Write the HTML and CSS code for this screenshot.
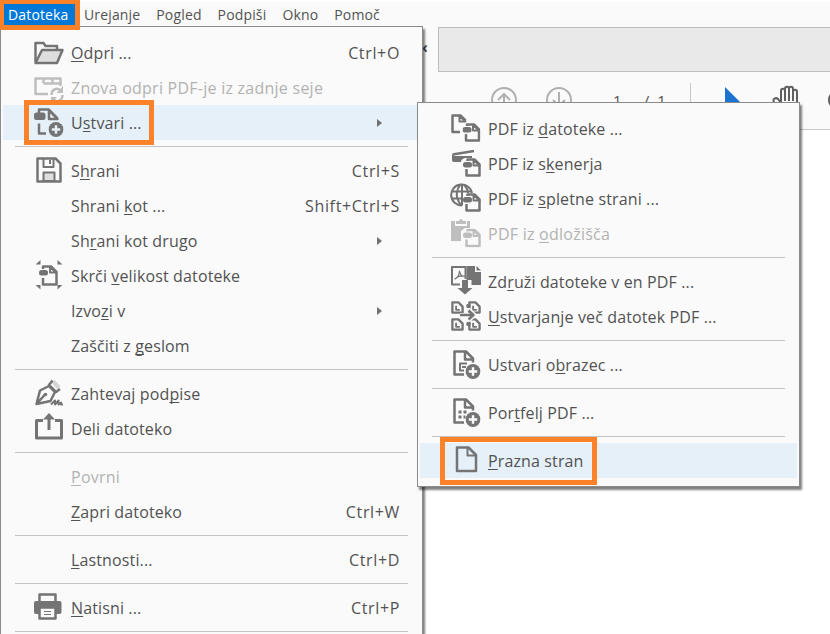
FILE: index.html
```
<!DOCTYPE html>
<html lang="sl">
<head>
    <title>Datoteka</title>
    <meta charset="utf-8">
    <link rel="stylesheet" href="styles.css">
</head>
<body>
    <svg class="defs">
        <symbol id="pdf-small" viewBox="0 0 18 19">
            <path d="M4.500 3V1.500h7l5 5v11H3.500V11" class="line"/>
            <path d="M10.500 2v5.500h6z" class="line thin"/>
            <rect x="0" y="4" width="9" height="5.500" rx="2.500" class="solid"/>
        </symbol>
        <symbol id="plus" viewBox="0 0 16 16">
            <circle cx="8" cy="8" r="8" class="solid"/>
            <path d="M8 3.500v9M3.500 8h9" class="knock"/>
        </symbol>
        <symbol id="page-tiny" viewBox="0 0 14 14">
            <path d="M1.500 1.500h6.500l4.500 4.500v6.500h-11z" class="line"/>
            <path d="M5.500 5v4.500h4" class="line thin"/>
        </symbol>
    </svg>

    <div class="menubar">
        <span class="active">Datoteka</span>
        <span>Urejanje</span>
        <span>Pogled</span>
        <span>Podpiši</span>
        <span>Okno</span>
        <span>Pomoč</span>
    </div>

    <div class="workspace">
        <div class="tabs"><span class="chevron">‹</span><div class="tab-area"></div></div>
        <div class="toolbar">
            <svg class="tool-icons" viewBox="0 0 406 57" width="406" height="57">
                <g class="nav">
                    <circle cx="80" cy="28" r="12"/><path d="M80 36V22M74 28l6-6 6 6"/>
                    <circle cx="135" cy="28" r="12"/><path d="M135 20v14M129 28l6 6 6-6"/>
                </g>
                <path d="M266.500 11v46" class="divider"/>
                <path d="M301 15l22 22h-13l-9 9z" class="pointer"/>
                <g class="hand">
                    <path d="M356 38l-6-8c-2-3 2-5 4-3l3 4V19c0-3 4-3 4 0v10V17c0-3 4-3 4 0v12V17c0-3 4-3 4 0v12V20c0-3 4-3 4 0v18"/>
                </g>
                <circle cx="414" cy="28" r="9" class="lens"/>
            </svg>
            <div class="pages"><span>1</span><span>/</span><span>1</span></div>
        </div>
    </div>

    <div class="menu file-menu">
        <div class="item">
            <svg class="icon" viewBox="0 0 32 35"><path d="M2.500 27V8h8l2 3h11.500v4" class="line"/><path d="M2.500 28l6.500-13h20.500l-5.500 13z" class="line pale"/></svg>
            <span><u>O</u>dpri ...</span><kbd>Ctrl+O</kbd>
        </div>
        <div class="item disabled">
            <svg class="icon" viewBox="0 0 32 35"><path d="M15 24H2.500V8.500h25v7.500M10.500 13.500h17M10.500 8v5M19.500 8v5" class="line"/><path d="M18.500 25c0-6 6-8 9.500-4M29.500 25c0 6-6 8-9.500 4" class="line"/><path d="M30 16v7h-6.500zM18 33.500v-6.500h6z" class="solid"/></svg>
            <span>Znova odpri PDF-je iz zadnje seje</span>
        </div>
        <div class="item selected">
            <svg class="icon" viewBox="0 0 32 35"><path d="M6 8V4.500h9.500l9 9M6 18.500V28.500h7" class="line"/><path d="M16 5v9h8.500z" class="line"/><rect x="1" y="7.500" width="11.500" height="7.500" rx="2.500" class="solid"/><use href="#plus" x="15.500" y="17" width="15" height="15"/></svg>
            <span>U<u>s</u>tvari ...</span><i class="arrow"></i>
        </div>
        <hr>
        <div class="item">
            <svg class="icon" viewBox="0 0 32 35"><path d="M4.500 5.500h18l5 5v18h-23z" class="line"/><path d="M10.500 6v8h10V6" class="line thin"/><path d="M10.500 28v-8.500h11V28z" class="line thin pale"/><path d="M17 7v4" class="line thin"/></svg>
            <span>S<u>h</u>rani</span><kbd>Ctrl+S</kbd>
        </div>
        <div class="item"><i class="icon"></i><span>Shrani <u>k</u>ot ...</span><kbd>Shift+Ctrl+S</kbd></div>
        <div class="item"><i class="icon"></i><span>Sh<u>r</u>ani kot drugo</span><i class="arrow"></i></div>
        <div class="item">
            <svg class="icon" viewBox="0 0 32 35"><path d="M10 11V8.500h8l5.500 5.500v12.500H10V20" class="line"/><path d="M17 9v5.500h6z" class="line thin"/><rect x="6" y="12" width="9" height="5.500" rx="2.500" class="solid"/><path d="M2.500 6.500h5V2zM29.500 6.500h-5V2zM2.500 27h5v4.500zM29.500 27h-5v4.500z" class="solid"/></svg>
            <span>Skrči <u>v</u>elikost datoteke</span>
        </div>
        <div class="item"><i class="icon"></i><span>Izvo<u>z</u>i v</span><i class="arrow"></i></div>
        <div class="item"><i class="icon"></i><span>Zaščiti z <u>g</u>eslom</span></div>
        <hr>
        <div class="item">
            <svg class="icon" viewBox="0 0 32 35"><path d="M18.500 6.500l3-2.500 6 6-3 3.500z" class="faded"/><path d="M3.500 28l3.500-13.500 9-4.500 6 6-4.500 9zM3.500 28l8.500-9.500" class="line"/><path d="M15.500 9.500l4-5M16 9l7 7 4-3" class="line"/><circle cx="12.500" cy="18.500" r="1.800" class="solid"/><path d="M18 28.500l4-4v4l3.500-4v4l2.500-2v2h2" class="line thin"/></svg>
            <span>Zahtevaj pod<u>p</u>ise</span>
        </div>
        <div class="item">
            <svg class="icon" viewBox="0 0 32 35"><path d="M10 9.500H3.500v17.500h25V9.500H22" class="line heavy"/><path d="M16 19V6" class="line heavy"/><path d="M10 8.500l6-6.500 6 6.500z" class="solid"/></svg>
            <span>Deli datoteko</span>
        </div>
        <hr>
        <div class="item disabled"><i class="icon"></i><span><u>P</u>ovrni</span></div>
        <div class="item"><i class="icon"></i><span><u>Z</u>apri datoteko</span><kbd>Ctrl+W</kbd></div>
        <hr>
        <div class="item"><i class="icon"></i><span><u>L</u>astnosti...</span><kbd>Ctrl+D</kbd></div>
        <hr>
        <div class="item">
            <svg class="icon" viewBox="0 0 32 35"><path d="M6.500 12V4.500h16V12" class="line"/><rect x="1" y="11" width="27.500" height="13" rx="2" class="solid"/><path d="M6.500 17.500h16v11h-16z" class="line blank"/><path d="M11 21.500h7M11 24.500h7" class="line hair"/></svg>
            <span><u>N</u>atisni ...</span><kbd>Ctrl+P</kbd>
        </div>
        <hr>
    </div>

    <div class="menu submenu">
        <div class="item">
            <svg class="icon" viewBox="0 0 32 35"><path d="M10 21H2.500V4.500h8l5 5" class="line"/><path d="M9.500 5v5.500h6z" class="line thin"/><use href="#pdf-small" x="12.500" y="12" width="18" height="19"/></svg>
            <span>PDF iz <u>d</u>atoteke ...</span>
        </div>
        <div class="item">
            <svg class="icon" viewBox="0 0 32 35"><path d="M2.500 8.500L24 5" class="line"/><path d="M2 8.500l3 1.500h17v2h-7q-4 1-4 4H4q-2 0-2-2z" class="solid"/><use href="#pdf-small" x="13" y="12" width="18" height="19"/></svg>
            <span>PDF iz s<u>k</u>enerja</span>
        </div>
        <div class="item">
            <svg class="icon" viewBox="0 0 32 35"><path d="M12 24.500A10.500 10.500 0 1 1 22 12M12 3.500v21M2 10.500h19M2 17.500h10M10 4q-7 10 1 20M14 4q4 4 4 8" class="line thin"/><use href="#pdf-small" x="13" y="12" width="18" height="19"/></svg>
            <span>PDF iz <u>s</u>pletne strani ...</span>
        </div>
        <div class="item disabled">
            <svg class="icon" viewBox="0 0 32 35"><path d="M1 5h4v5h12V5h3v7h-5l-4 3v10H1z" class="solid"/><path d="M6 8V5h3q2-4 4 0h3v3z" class="solid"/><use href="#pdf-small" x="13" y="12.500" width="18" height="19"/></svg>
            <span>PDF iz <u>o</u>dložišča</span>
        </div>
        <hr>
        <div class="item">
            <svg class="icon" viewBox="0 0 32 35"><path d="M10 20.500H2V3h13.500v12" class="line thin"/><path d="M5 15q4-2 4.500-8 1 6 5 5-6-1-9.500 3z" class="line hair"/><path d="M16.500 2H25v6h6v13h-9.500v-5h-5z" class="solid"/><path d="M26.500 2l4.500 4.500h-4.500z" class="solid"/><path d="M12 16h6v8h4.500L15 30.500 7.500 24H12z" class="solid"/></svg>
            <span>Zd<u>r</u>uži datoteke v en PDF ...</span>
        </div>
        <div class="item">
            <svg class="icon" viewBox="0 0 32 35"><use href="#page-tiny" x="1" y="2" width="13" height="13"/><use href="#page-tiny" x="1" y="19" width="13" height="13"/><use href="#page-tiny" x="18" y="2" width="13" height="13"/><use href="#page-tiny" x="18" y="19" width="13" height="13"/><path d="M10 16h15M17.500 9.500l7 6.500-7 6.500" class="halo-line"/><path d="M10 16h13M18.500 11.500l5 4.500-5 4.500" class="line"/><circle cx="18.500" cy="7" r="2.300" class="solid"/><circle cx="18.500" cy="25" r="2.300" class="solid"/></svg>
            <span><u>U</u>stvarjanje več datotek PDF ...</span>
        </div>
        <hr>
        <div class="item">
            <svg class="icon" viewBox="0 0 32 35"><path d="M14 27.500H4.500V4.500h11.500l7 7v4" class="line"/><path d="M15 5v7.500h8" class="line"/><path d="M17 16.500h-7v7h4M12 20h4" class="line thin"/><use href="#plus" x="15.500" y="17" width="15" height="15"/></svg>
            <span>Ustvari o<u>b</u>razec ...</span>
        </div>
        <hr>
        <div class="item">
            <svg class="icon" viewBox="0 0 32 35"><path d="M14 27.500H4.500V4.500h11.500l7 7v4" class="line"/><path d="M15 5v7.500h8" class="line"/><path d="M8.500 15.500h3v3h-3zM13.500 15.500h3v3h-3zM8.500 20.500h3v3h-3zM13.500 20.500h2v3h-2z" class="solid"/><use href="#plus" x="15.500" y="17" width="15" height="15"/></svg>
            <span>Por<u>t</u>felj PDF ...</span>
        </div>
        <hr>
        <div class="item selected">
            <svg class="icon" viewBox="0 0 32 35"><path d="M7 4.500h11.500l7.500 7.500v16H7z" class="line"/><path d="M17.500 5v7.500h8" class="line thin"/></svg>
            <span><u>P</u>razna stran</span>
        </div>
    </div>

    <div class="mark mark-file"></div>
    <div class="mark mark-create"></div>
    <div class="mark mark-blank"></div>
</body>
</html>
```

FILE: styles.css
```
body {
    font-family: "Open Sans", "Noto Sans", sans-serif;
    font-size: 16px;
    letter-spacing: 0.13px;
    color: #525252;
    background-color: white;
    margin: 0;
    position: relative;
    width: 830px;
    height: 634px;
    overflow: hidden;
}

.defs {
    position: absolute;
    width: 0;
    height: 0;
}

.menubar {
    display: flex;
    box-sizing: border-box;
    height: 27px;
    padding: 2px 0 2px 4px;
    background-color: #fafafa;
    border-top: 2px solid white;
    font-size: 14px;
    line-height: 21px;
    letter-spacing: 0.15px;
}

.menubar span {
    padding: 0 5px;
    margin-right: 6px;
}

.menubar .active {
    width: 63px;
    padding: 0 4px;
    margin-right: 4px;
    background-color: #0078d7;
    color: white;
}

.workspace {
    margin-left: 424px;
}

.tabs {
    display: flex;
    justify-content: space-between;
    height: 45px;
    background-color: #fafafa;
}

.tab-area {
    width: 392px;
    box-sizing: border-box;
    background-color: #e9e9e9;
    border: 1px solid #bdbdbd;
    border-right: 0;
}

.chevron {
    width: 4px;
    line-height: 40px;
    margin-left: -2px;
    font-weight: bold;
}

.toolbar {
    position: relative;
    height: 57px;
    background-color: #fafafa;
    border-bottom: 1px solid #c8c8c8;
}

.tool-icons {
    display: block;
}

.pages {
    position: absolute;
    left: 189px;
    top: 18px;
    display: flex;
    font-size: 15px;
    line-height: 20px;
}

.pages span:nth-child(2) {
    margin: 0 8px 0 22px;
}

.nav, .hand, .lens, .divider {
    fill: none;
    stroke: #b0b0b0;
    stroke-width: 2;
}

.divider {
    stroke: #c8c8c8;
    stroke-width: 1;
}

.hand, .lens {
    stroke: #606060;
}

.pointer {
    fill: #1a73d0;
}

.menu {
    position: absolute;
    box-sizing: border-box;
    background-color: #fafafa;
    border: 1px solid #8a8a8a;
    box-shadow: 2px 3px 2px rgba(0, 0, 0, 0.5);
}

.file-menu {
    left: 0;
    top: 26px;
    width: 423px;
    height: 620px;
    padding: 8px 2px;
}

.submenu {
    left: 417px;
    top: 102px;
    width: 383px;
    height: 385px;
    padding: 8px 2px;
}

.item {
    display: flex;
    align-items: center;
    height: 35px;
    padding-left: 30px;
    padding-right: 19px;
    white-space: pre;
    --ink: #747474;
    --back: #fafafa;
}

.item span {
    padding-left: 6px;
}

.item u {
    text-decoration-thickness: 1px;
    text-decoration-skip-ink: none;
    text-underline-offset: 2px;
}

.item kbd {
    font-family: inherit;
    letter-spacing: 0.65px;
    margin-left: auto;
    margin-right: 1px;
}

.item.disabled {
    color: #b2b2b2;
    letter-spacing: 0.25px;
    --ink: #bebebe;
}

.item.selected {
    background-color: #e5f0f9;
    --back: #e5f0f9;
}

.icon {
    width: 32px;
    height: 35px;
    flex: none;
}

.arrow {
    margin-left: auto;
    margin-right: 19px;
    border: 4px solid transparent;
    border-left: 5px solid #707070;
    border-right: 0;
}

hr {
    border: 0;
    height: 1px;
    margin: 6px 12px;
    background-color: #c4c4c4;
}

.line {
    fill: none;
    stroke: var(--ink);
    stroke-width: 2.5;
    stroke-linejoin: round;
}

.thin {
    stroke-width: 2;
}

.hair {
    stroke-width: 1.2;
}

.heavy {
    stroke-width: 3;
}

.pale {
    fill: #dedede;
}

.blank {
    fill: var(--back);
}

.solid {
    fill: var(--ink);
}

.faded {
    fill: #d4d4d4;
}

.knock, .halo-line {
    fill: none;
    stroke: var(--back);
    stroke-width: 2.6;
}

.halo-line {
    stroke-width: 4;
}

.mark {
    position: absolute;
    box-sizing: border-box;
    border: 5px solid #fb8228;
}

.mark-file {
    left: 0;
    top: 0;
    width: 80px;
    height: 30px;
    border-top-width: 4px;
    border-left-width: 4px;
}

.mark-create {
    left: 24px;
    top: 100px;
    width: 130px;
    height: 45px;
}

.mark-blank {
    left: 440px;
    top: 437px;
    width: 157px;
    height: 48px;
}
```
